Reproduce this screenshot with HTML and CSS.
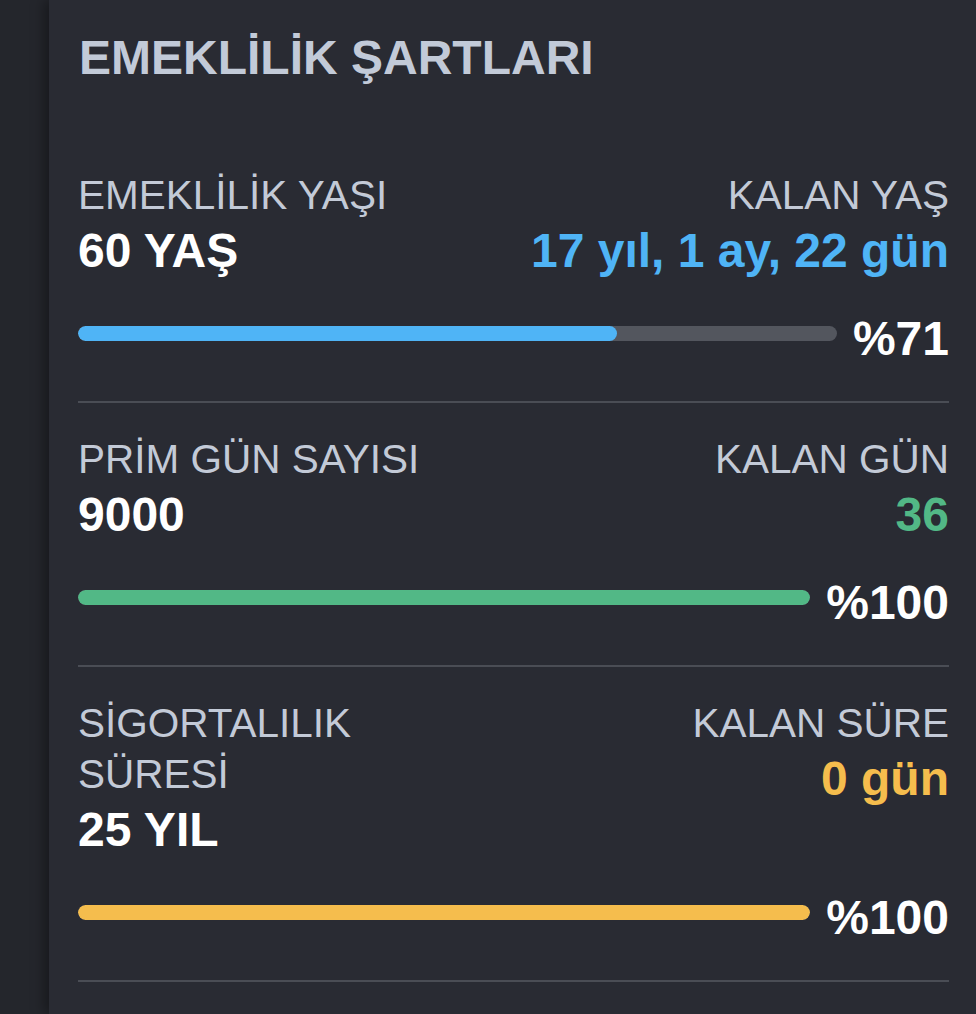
FILE: index.html
```html
<!DOCTYPE html>
<html lang="tr">
<head>
<meta charset="utf-8">
<title>Emeklilik Şartları</title>
<link rel="stylesheet" href="styles.css">
</head>
<body>
<div class="card">
  <h1 class="title">EMEKLİLİK ŞARTLARI</h1>

  <section class="req">
    <div class="req-head">
      <div class="col left">
        <div class="label">EMEKLİLİK YAŞI</div>
        <div class="value">60 YAŞ</div>
      </div>
      <div class="col right">
        <div class="label">KALAN YAŞ</div>
        <div class="value blue">17 yıl, 1 ay, 22 gün</div>
      </div>
    </div>
    <div class="bar-row">
      <div class="track"><div class="fill fill-blue" style="width:71%"></div></div>
      <div class="pct">%71</div>
    </div>
  </section>

  <section class="req">
    <div class="req-head">
      <div class="col left">
        <div class="label">PRİM GÜN SAYISI</div>
        <div class="value">9000</div>
      </div>
      <div class="col right">
        <div class="label">KALAN GÜN</div>
        <div class="value green">36</div>
      </div>
    </div>
    <div class="bar-row">
      <div class="track"><div class="fill fill-green" style="width:100%"></div></div>
      <div class="pct">%100</div>
    </div>
  </section>

  <section class="req">
    <div class="req-head">
      <div class="col left">
        <div class="label">SİGORTALILIK SÜRESİ</div>
        <div class="value">25 YIL</div>
      </div>
      <div class="col right">
        <div class="label">KALAN SÜRE</div>
        <div class="value yellow">0 gün</div>
      </div>
    </div>
    <div class="bar-row">
      <div class="track"><div class="fill fill-yellow" style="width:100%"></div></div>
      <div class="pct">%100</div>
    </div>
  </section>
</div>
</body>
</html>
```

FILE: styles.css
```css
html, body {
  margin: 0;
  padding: 0;
}
body {
  background: #24262c;
  font-family: "Liberation Sans", Arial, sans-serif;
  min-height: 100vh;
  overflow: hidden;
}
.card {
  margin-left: 49px;
  min-height: 1014px;
  background: #292b33;
  box-shadow: -5px 0 12px rgba(0, 0, 0, 0.35);
  padding: 30px 27px 0 29px;
  box-sizing: border-box;
}
.title {
  margin: 0 0 54px 0;
  font-size: 48px;
  line-height: 55px;
  font-weight: 700;
  color: #c2cad8;
  padding-left: 1px;
}
.req {
  padding: 31px 0 35px 0;
  border-bottom: 2px solid #4a4d55;
}
.req-head {
  display: flex;
  justify-content: space-between;
  align-items: flex-start;
}
.col.left {
  max-width: 400px;
}
.col.right {
  text-align: right;
}
.label {
  font-size: 40.5px;
  line-height: 51px;
  color: #c3cad7;
}
.value {
  font-size: 48px;
  line-height: 59px;
  font-weight: 700;
  color: #ffffff;
}
.value.blue { color: #4fb4f6; }
.value.green { color: #52b886; }
.value.yellow { color: #f5bd4d; }
.bar-row {
  display: flex;
  align-items: center;
  gap: 16px;
  margin-top: 32px;
}
.track {
  flex: 1;
  height: 15px;
  border-radius: 8px;
  background: #53565e;
  overflow: hidden;
  margin-bottom: 12px;
}
.fill {
  height: 100%;
  border-radius: 8px;
}
.fill-blue { background: #4fb4f6; }
.fill-green { background: #52b886; }
.fill-yellow { background: #f5bd4d; }
.pct {
  font-size: 48px;
  line-height: 54px;
  font-weight: 700;
  color: #ffffff;
}
```
